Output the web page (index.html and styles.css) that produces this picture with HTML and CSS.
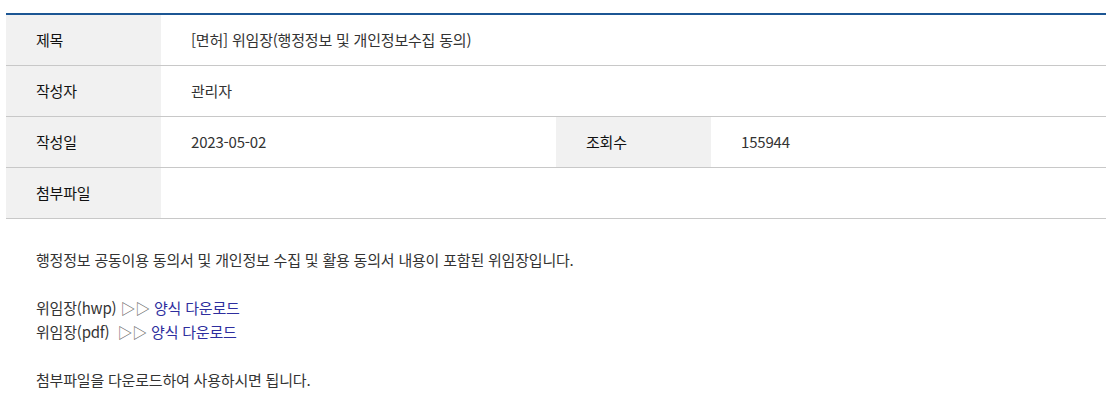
FILE: index.html
```html
<!DOCTYPE html>
<html lang="ko">
<head>
    <meta charset="UTF-8">
    <title>게시판 보기</title>
    <link rel="stylesheet" href="styles.css">
</head>
<body>
<div class="board">
    <table class="viewTable">
        <colgroup>
            <col class="th">
            <col>
            <col class="th">
            <col>
        </colgroup>
        <tr>
            <th>제목</th>
            <td colspan="3">[면허] 위임장(행정정보 및 개인정보수집 동의)</td>
        </tr>
        <tr>
            <th>작성자</th>
            <td colspan="3">관리자</td>
        </tr>
        <tr>
            <th>작성일</th>
            <td>2023-05-02</td>
            <th>조회수</th>
            <td>155944</td>
        </tr>
        <tr>
            <th>첨부파일</th>
            <td colspan="3"></td>
        </tr>
    </table>
    <div class="viewCont">
        <p>행정정보 공동이용 동의서 및 개인정보 수집 및 활용 동의서 내용이 포함된 위임장입니다.</p>
        <p>위임장(hwp) <span class="arr">▷▷</span> <a href="#">양식 다운로드</a><br>
        위임장(pdf)&nbsp; <span class="arr">▷▷</span> <a href="#">양식 다운로드</a></p>
        <p>첨부파일을 다운로드하여 사용하시면 됩니다.</p>
    </div>
</div>
</body>
</html>
```

FILE: styles.css
```css
*{
    margin: 0;
    padding: 0;
}
html,body{
    width: 100%;
    height: 100%;
    background: #fff;
}
body{
    font-family: "Noto Sans CJK KR", "Noto Sans", sans-serif;
    font-size: 15px;
    letter-spacing: -0.2px;
    color: #333;
}
.board{
    width: 1100px;
    padding: 13px 0 0 6px;
}
.viewTable{
    width: 100%;
    border-collapse: collapse;
    table-layout: fixed;
    border-top: 2px solid #1c5694;
}
.viewTable col.th{
    width: 155px;
}
.viewTable th,
.viewTable td{
    height: 50px;
    padding: 0 30px;
    border-bottom: 1px solid #c8c8c8;
    text-align: left;
    font-weight: normal;
    line-height: 20px;
}
.viewTable th{
    background: #f1f1f1;
    color: #111;
}
.viewTable td{
    color: #333;
}
.viewCont{
    padding: 29px 30px 0;
    line-height: 24px;
    color: #333;
}
.viewCont p{
    margin-bottom: 24px;
}
.viewCont .arr{
    color: #666;
}
.viewCont a{
    color: #2e2e9e;
    text-decoration: none;
}
```
